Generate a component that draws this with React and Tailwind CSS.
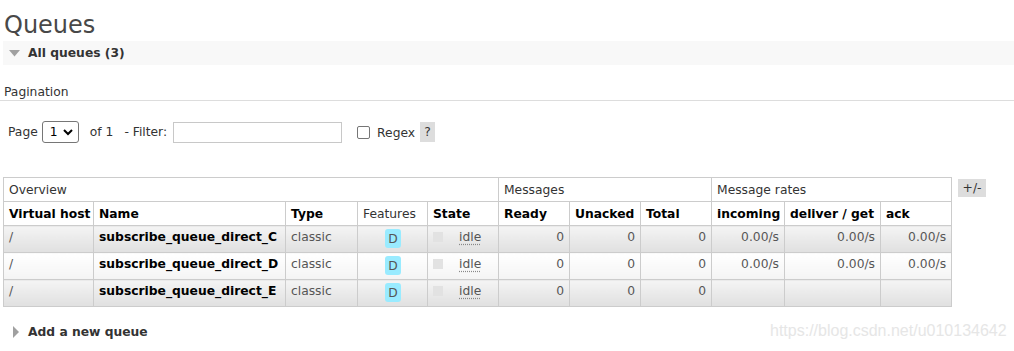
import React from "react";

const rows = [
  { name: "subscribe_queue_direct_C", rates: true, odd: true },
  { name: "subscribe_queue_direct_D", rates: true, odd: false },
  { name: "subscribe_queue_direct_E", rates: false, odd: true },
];

const Triangle = ({ dir }) =>
  dir === "down" ? (
    <svg width="11" height="7" viewBox="0 0 11 7" className="shrink-0">
      <path d="M0 0 L11 0 L5.5 6.5 Z" fill="#a0a0a0" />
    </svg>
  ) : (
    <svg width="6" height="12" viewBox="0 0 6 12" className="shrink-0">
      <path d="M0 0 L6 6 L0 12 Z" fill="#a0a0a0" />
    </svg>
  );

const App = () => {
  const th = "border border-[#ccc] px-[5px] text-left font-bold text-black h-[24px] leading-[16px] whitespace-nowrap";
  const gh = "border border-[#ccc] px-[5px] text-left font-normal text-[#333] h-[24px] leading-[16px] whitespace-nowrap";

  return (
    <div className="relative w-[1014px] h-[351px] overflow-hidden bg-white font-['DejaVu_Sans',Verdana,sans-serif] text-[12.3px] text-[#484848]">
      <h1 className="mt-[13px] pl-[4px] text-[24px] leading-[25px] text-[#484848]">
        Queues
      </h1>

      <div className="ml-[3px] mt-[3px] h-[24px] flex items-center gap-[8px] bg-[#f8f8f8] pl-[6px]">
        <Triangle dir="down" />
        <span className="font-bold text-[#333]">All queues (3)</span>
      </div>

      <div className="mt-[20px] h-[16px] border-b border-[#ddd] pl-[4px] leading-[14px] text-[#333]">
        Pagination
      </div>

      <div className="mt-[20px] flex items-center h-[22px] pl-[8px] text-[#333]">
        <span>Page</span>
        <div className="ml-[4px] w-[37px] h-[22px] border border-[#767676] rounded-[3px] flex items-center justify-between pl-[7px] pr-[5px] text-black">
          <span>1</span>
          <svg width="10" height="7" viewBox="0 0 10 7">
            <path d="M1 1 L5 5 L9 1" stroke="#000" strokeWidth="2" fill="none" />
          </svg>
        </div>
        <span className="ml-[11px]">of 1</span>
        <span className="ml-[11px]">- Filter:</span>
        <div className="ml-[6px] w-[169px] h-[21px] border border-[#c8c8c8]" />
        <div className="ml-[15px] w-[13px] h-[13px] border border-[#767676] rounded-[2px] bg-white" />
        <span className="ml-[7px] mt-[2px]">Regex</span>
        <span className="ml-[5px] w-[15px] h-[20px] bg-[#ddd] flex items-center justify-center">?</span>
      </div>

      <div className="mt-[34px] ml-[3px] flex items-start">
        <table className="table-fixed border-collapse w-[948px]">
          <colgroup>
            <col className="w-[90px]" />
            <col className="w-[192px]" />
            <col className="w-[72px]" />
            <col className="w-[70px]" />
            <col className="w-[71px]" />
            <col className="w-[71px]" />
            <col className="w-[71px]" />
            <col className="w-[71px]" />
            <col className="w-[73px]" />
            <col className="w-[96px]" />
            <col className="w-[71px]" />
          </colgroup>
          <thead>
            <tr>
              <th colSpan={5} className={gh}>Overview</th>
              <th colSpan={3} className={gh}>Messages</th>
              <th colSpan={3} className={gh}>Message rates</th>
            </tr>
            <tr>
              <th className={th}>Virtual host</th>
              <th className={th}>Name</th>
              <th className={th}>Type</th>
              <th className={`${th} !font-normal !text-[#333]`}>Features</th>
              <th className={th}>State</th>
              <th className={th}>Ready</th>
              <th className={th}>Unacked</th>
              <th className={th}>Total</th>
              <th className={th}>incoming</th>
              <th className={th}>deliver / get</th>
              <th className={th}>ack</th>
            </tr>
          </thead>
          <tbody>
            {rows.map((r) => {
              const bg = r.odd
                ? "bg-gradient-to-b from-[#f4f4f4] to-[#e0e0e0]"
                : "bg-gradient-to-b from-[#ffffff] to-[#f4f4f4]";
              const td = `border border-[#ccc] h-[27px] align-top pt-[3px] leading-[16px] px-[5px] whitespace-nowrap ${bg}`;
              const num = `${td} text-right text-[#555]`;
              return (
                <tr key={r.name}>
                  <td className={`${td} text-[#555]`}>/</td>
                  <td className={`${td} font-bold text-black`}>{r.name}</td>
                  <td className={`${td} text-[#555]`}>classic</td>
                  <td className={`${td} !pt-[2px]`}>
                    <div className="flex justify-center">
                      <span className="w-[16px] h-[19px] rounded-[3px] bg-[#99ebff] text-[#555] flex items-center justify-center mt-[1px] ml-[1px]">
                        D
                      </span>
                    </div>
                  </td>
                  <td className={td}>
                    <div className="flex items-start">
                      <span className="mt-[3px] w-[10px] h-[10px] bg-[#e2e2e2]" />
                      <span className="ml-[16px] text-[#555] underline decoration-dotted decoration-[#888] underline-offset-[3px]">
                        idle
                      </span>
                    </div>
                  </td>
                  <td className={num}>0</td>
                  <td className={num}>0</td>
                  <td className={num}>0</td>
                  <td className={num}>{r.rates ? "0.00/s" : ""}</td>
                  <td className={num}>{r.rates ? "0.00/s" : ""}</td>
                  <td className={num}>{r.rates ? "0.00/s" : ""}</td>
                </tr>
              );
            })}
          </tbody>
        </table>
        <span className="ml-[6px] mt-[2px] w-[28px] h-[18px] bg-[#ddd] text-[#333] flex items-center justify-center">
          +/-
        </span>
      </div>

      <div className="mt-[17px] flex items-center h-[16px] pl-[13px] gap-[9px]">
        <Triangle dir="right" />
        <span className="font-bold text-[#333]">Add a new queue</span>
      </div>

      <div className="absolute left-[770px] top-[321px] font-['Liberation_Sans',Arial,sans-serif] text-[16px] leading-[20px] text-[#e6e6e6]">
        https://blog.csdn.net/u010134642
      </div>
    </div>
  );
};

export default App;
